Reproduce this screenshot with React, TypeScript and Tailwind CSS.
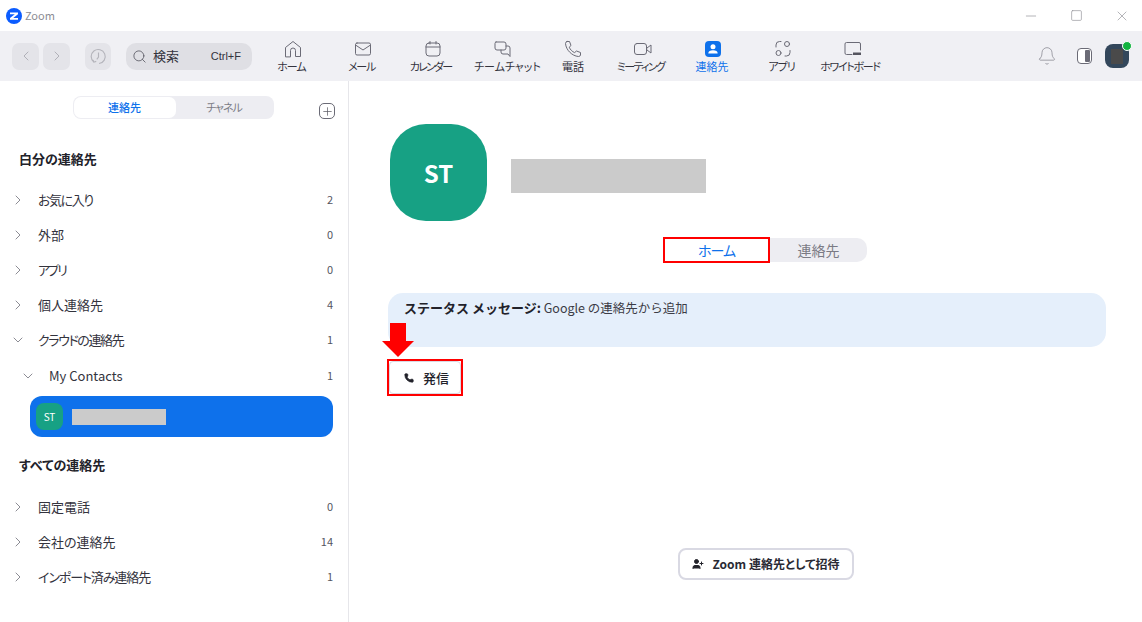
import React from "react";
import { ChevronLeft, ChevronRight, ChevronDown, Search, Phone, Plus, Minus, Square, X, Bell, UserPlus } from "lucide-react";

const I = { width: 20, height: 20, viewBox: "0 0 20 20", fill: "none", stroke: "#6b6b76", strokeWidth: 1, strokeLinecap: "round" as const, strokeLinejoin: "round" as const };

const nav: { label: string; icon: React.ReactNode; active?: boolean; cls?: string }[] = [
  { label: "ホーム", cls: "mr-[3px] tracking-[-1px]", icon: <svg {...I}><path d="M2.500 17.500V8.500L10 2.500l7.500 6v9h-5v-6a2.500 2.500 0 0 0-5 0v6z" /></svg> },
  { label: "メール", cls: "mr-[3px] tracking-[-1.300px]", icon: <svg {...I}><rect x="2.500" y="4" width="15" height="12" rx="1.500" /><path d="M2.500 6l7.500 5 7.500-5" /></svg> },
  { label: "カレンダー", cls: "mr-[5px] tracking-[-1.800px]", icon: <svg {...I}><rect x="3" y="4" width="14" height="13" rx="3" /><path d="M3 8h14M7 2.500V5M13 2.500V5" /></svg> },
  { label: "チームチャット", cls: "ml-[9px]", icon: <svg {...I}><path d="M3 3h8a2 2 0 0 1 2 2v4a2 2 0 0 1-2 2H6l-2 0a2 2 0 0 1-2-2V4.500A1.500 1.500 0 0 1 3 3z" /><path d="M8 11v2a2 2 0 0 0 2 2h5l2 2.500V9a2 2 0 0 0-2-2h-2" /></svg> },
  { label: "電話", icon: <svg {...I}><path d="M4 2.500h2.500L8 6.500 6.200 8.200c1 2.400 3 4.400 5.400 5.400L13.500 12l4 1.500V16a2 2 0 0 1-2 1.500C9 17 3 11 2.500 4.500A2 2 0 0 1 4 2.500z" /></svg> },
  { label: "ミーティング", cls: "mr-[5px] tracking-[-1.700px]", icon: <svg {...I}><rect x="1.500" y="4.500" width="12" height="11" rx="2.500" /><path d="M14 9l4-3v8l-4-3z" /></svg> },
  {
    label: "連絡先",
    active: true,
    cls: "mr-[2px]",
    icon: (
      <svg width="18" height="18" viewBox="0 0 18 18">
        <rect width="16" height="16" x="1" y="1" rx="4" fill="#0e71eb" />
        <circle cx="9" cy="6.800" r="2.500" fill="#fff" />
        <path d="M4.300 13.500c0-2.200 1.800-3.300 4.700-3.300s4.700 1.100 4.700 3.300z" fill="#fff" />
      </svg>
    ),
  },
  { label: "アプリ", cls: "mr-[3px] tracking-[-1px]", icon: <svg {...I}><circle cx="14" cy="5" r="2.500" /><circle cx="5.500" cy="14" r="2.500" /><path d="M3 8V6a3.500 3.500 0 0 1 3.500-3.500H8M17 11.500V13.500A3.500 3.500 0 0 1 13.500 17H12" /></svg> },
  { label: "ホワイトボード", cls: "mr-[6px] tracking-[-1.300px]", icon: <svg {...I}><path d="M17.500 11V5a1.500 1.500 0 0 0-1.500-1.500H3.500A1.500 1.500 0 0 0 2 5v9a1.500 1.500 0 0 0 1.500 1.500H9" /><rect x="10" y="13.500" width="8" height="2.500" fill="#55555f" stroke="none" /></svg> },
];

function Row({ label, count, open, indent, cls }: { label: string; count: number; open?: boolean; indent?: boolean; cls?: string }) {
  return (
    <div className={`flex h-[35px] items-center pr-[15px] ${indent ? "pl-[20px]" : "pb-[2px] pl-[10px]"}`}>
      {open ? <ChevronDown size={16} color="#6e6e78" strokeWidth={1.200} /> : <ChevronRight size={16} color="#6e6e78" strokeWidth={1.200} />}
      <span className={`flex-1 text-[13px] text-[#33333d] [font-feature-settings:"palt"] ${indent ? "ml-[13px]" : "ml-[12px]"} ${cls ?? ""}`}>{label}</span>
      <span className="text-[11px] text-[#55555f]">{count}</span>
    </div>
  );
}

export default function App() {
  return (
    <div className="flex h-[622px] w-[1142px] flex-col overflow-hidden bg-white" style={{ fontFamily: '"Noto Sans CJK JP", "Noto Sans", sans-serif' }}>
      {/* Title bar */}
      <div className="flex h-[31px] items-center pl-[6px] pr-[12px]">
        <svg width="16" height="16" viewBox="0 0 16 16">
          <circle cx="8" cy="8" r="8" fill="#0b5cff" />
          <path d="M4 4.500h8v1.800L7.200 10H12v1.700H4V10l4.800-3.700H4z" fill="#fff" />
        </svg>
        <span className="ml-[3px] text-[11px] text-[#8c8c94]">Zoom</span>
        <div className="ml-auto flex items-center gap-[31px]">
          <Minus size={16} color="#8f8f96" strokeWidth={1} />
          <Square size={13} color="#8f8f96" strokeWidth={1.200} />
          <X size={16} color="#8f8f96" strokeWidth={1} />
        </div>
      </div>

      {/* Toolbar */}
      <div className="flex h-[50px] items-center bg-[#f0f0f4] pl-[12px] pr-[13px]">
        <div className="flex gap-[4px]">
          <div className="flex h-[27px] w-[27px] items-center justify-center rounded-[7px] bg-[#e4e4e9]"><ChevronLeft size={16} color="#a8a8b0" strokeWidth={1.300} /></div>
          <div className="flex h-[27px] w-[27px] items-center justify-center rounded-[7px] bg-[#e4e4e9]"><ChevronRight size={16} color="#a8a8b0" strokeWidth={1.300} /></div>
        </div>
        <div className="ml-[15px] flex h-[27px] w-[26px] items-center justify-center rounded-[7px] bg-[#e4e4e9]">
          <svg width="17" height="17" viewBox="0 0 15 15" fill="none" stroke="#b4b4bb" strokeWidth="1">
            <path d="M3.500 12.500A6.200 6.200 0 1 1 8 13.700" />
            <path d="M7.500 4v4l-1.500 2M2.500 10.500l1 2 2-.7" />
          </svg>
        </div>
        <div className="ml-[15px] flex h-[27px] w-[126px] items-center rounded-[10px] bg-[#dfdfe4] pl-[6px] pr-[11px]">
          <Search size={15} color="#55555f" strokeWidth={1.300} />
          <span className="ml-[6px] text-[13px] text-[#33333d]">検索</span>
          <span className="ml-auto text-[11px] text-[#33333d]" style={{ fontFamily: '"Liberation Sans", sans-serif' }}>Ctrl+F</span>
        </div>
        <div className="ml-[5px] flex pl-[1px]">
          {nav.map((n) => (
            <div key={n.label} className="flex w-[70px] flex-col items-center">
              <div className="flex h-[20px] items-center justify-center">{n.icon}</div>
              <span className={`whitespace-nowrap text-[11px] leading-[14px] [font-feature-settings:"palt"] ${n.cls ?? ""} ${n.active ? "text-[#0e71eb]" : "text-[#33333d]"}`}>{n.label}</span>
            </div>
          ))}
        </div>
        <div className="ml-auto flex items-center">
          <Bell size={20} color="#85858e" strokeWidth={0.900} />
          <div className="relative ml-[20px] h-[16px] w-[15px] rounded-[4px] border border-[#6b6b76] bg-white">
            <div className="absolute bottom-[1px] right-[1px] top-[1px] w-[5px] rounded-[1px] bg-[#6b6b76]" />
          </div>
          <div className="relative ml-[13px] flex h-[24px] w-[24px] items-center justify-center rounded-[8px] bg-[#33475b]">
            <div className="h-[15px] w-[12px] bg-[#4a4a4a]" />
            <div className="absolute right-[-3px] top-[-3px] h-[10px] w-[10px] rounded-full border border-white bg-[#12b33f]" />
          </div>
        </div>
      </div>

      <div className="flex flex-1">
        {/* Sidebar */}
        <div className="w-[349px] border-r border-[#e6e6ea]">
          <div className="relative flex justify-center pr-[1px] pt-[15px]">
            <div className="mr-[1px] flex h-[23px] w-[201px] rounded-[8px] bg-[#ededf2] p-[1px]">
              <div className="flex w-[102px] items-center justify-center rounded-[7px] bg-white text-[11px] font-medium text-[#0e71eb]">連絡先</div>
              <div className="flex flex-1 items-center justify-center text-[11px] tracking-[-1px] text-[#7b7b85] [font-feature-settings:'palt']">チャネル</div>
            </div>
            <div className="absolute left-[319px] top-[22px] flex h-[16px] w-[16px] items-center justify-center rounded-[5px] border border-[#6b6b76]">
              <Plus size={13} color="#55555f" strokeWidth={1.300} />
            </div>
          </div>
          <div className="ml-[19px] mt-[31px] text-[13px] font-bold leading-[18px] text-[#22222a] [font-feature-settings:'palt']">白分の連絡先</div>
          <div className="mt-[15px]">
            <Row label="お気に入り" count={2} cls="tracking-[-1.400px]" />
            <Row label="外部" count={0} />
            <Row label="アプリ" count={0} cls="tracking-[-2.500px]" />
            <Row label="個人連絡先" count={4} />
            <Row label="クラウドの連絡先" count={1} open cls="tracking-[-1.400px]" />
            <Row label="My Contacts" count={1} open indent />
          </div>
          <div className="ml-[30px] mt-[3px] flex h-[41px] w-[303px] items-center rounded-[12px] bg-[#0e71eb] pl-[6px]">
            <div className="flex h-[27px] w-[27px] items-center justify-center rounded-[8px] bg-[#17a184] text-[10px] text-white">ST</div>
            <div className="ml-[9px] h-[16px] w-[94px] bg-[#cbcbcb]" />
          </div>
          <div className="ml-[19px] mt-[19px] text-[13px] font-bold leading-[18px] text-[#22222a] [font-feature-settings:'palt']">すべての連絡先</div>
          <div className="mt-[16px]">
            <Row label="固定電話" count={0} />
            <Row label="会社の連絡先" count={14} />
            <Row label="インポート済み連絡先" count={1} cls="tracking-[-1.100px]" />
          </div>
        </div>

        {/* Main */}
        <div className="relative flex-1 pl-[41px] pr-[36px] pt-[43px]">
          <div className="flex">
            <div className="flex h-[97px] w-[97px] items-center justify-center rounded-[36px] bg-[#17a184] text-[24px] font-semibold text-white">ST</div>
            <div className="ml-[24px] mt-[35px] h-[34px] w-[195px] bg-[#cbcbcb]" />
          </div>
          <div className="ml-[273px] mt-[16px] flex">
            <div className="z-10 flex h-[26px] w-[107px] items-center justify-center border-2 border-[#ff0000] bg-white text-[14px] tracking-[-1px] text-[#0e71eb] [font-feature-settings:'palt']">ホーム</div>
            <div className="mt-[1px] flex h-[24px] w-[97px] items-center justify-center rounded-r-[10px] bg-[#ededf2] text-[14px] text-[#7b7b85]">連絡先</div>
          </div>
          <div className="ml-[-2px] mt-[30px] h-[54px] w-[718px] rounded-[15px] bg-[#e5effb] pl-[16px] pt-[6px] text-[12.500px] leading-[18px] text-[#3c3c46]">
            <span className="text-[13px] font-bold text-[#22222a]">ステータス メッセージ:</span> Google の連絡先から追加
          </div>
          <div className="ml-[-3px] mt-[12px] h-[37px] w-[76px] border-2 border-[#ff0000]">
            <div className="flex h-full items-center rounded-[4px] border border-[#d9d9e3] pl-[14px]">
              <Phone size={10} fill="#22222a" color="#22222a" />
              <span className="ml-[9px] text-[13px] font-medium text-[#22222a]">発信</span>
            </div>
          </div>
          <svg className="absolute left-[33px] top-[242px]" width="32" height="34" viewBox="0 0 32 34">
            <path d="M8 0h16v18h8L16 34 0 18h8z" fill="#ff0000" />
          </svg>
          <div className="absolute bottom-[42px] left-[329px] flex h-[32px] w-[176px] items-center justify-center rounded-[8px] border-2 border-[#d9d9e3] bg-white">
            <UserPlus size={12} fill="#22222a" color="#22222a" />
            <span className="ml-[8px] text-[12px] font-bold text-[#2a2a34] [font-feature-settings:'palt']">Zoom 連絡先として招待</span>
          </div>
        </div>
      </div>
    </div>
  );
}
